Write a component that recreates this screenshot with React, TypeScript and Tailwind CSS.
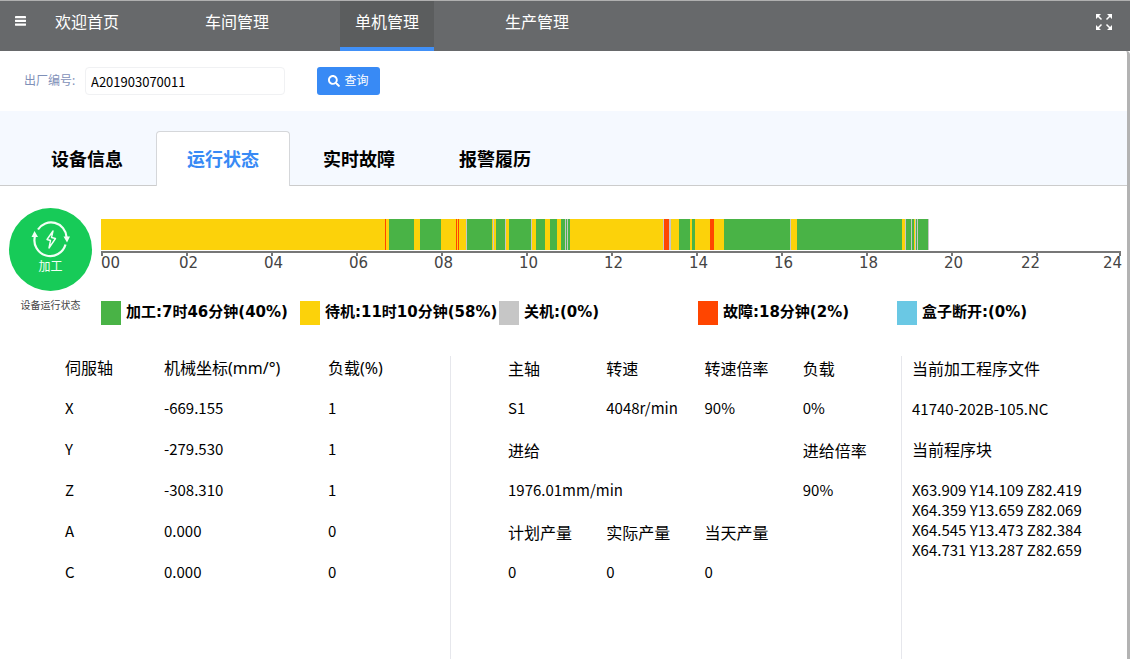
import React from "react";
import { FaSearch } from "react-icons/fa";

const navItems = ["欢迎首页", "车间管理", "单机管理", "生产管理"];
const tabs = ["设备信息", "运行状态", "实时故障", "报警履历"];

const GREEN = "#49b346";
const YELLOW = "#fcd20a";
const RED = "#ff4500";
const GRAY = "#c6c6c6";

/* Each run: [length, colour]; one unit is 1/1020 of the 24-hour axis. */
const runs: [number, string][] = [
  [284, YELLOW], [1, RED], [3, YELLOW], [25, GREEN], [6, YELLOW], [21, GREEN],
  [15, YELLOW], [1, RED], [1, YELLOW], [1, RED], [7, YELLOW], [1, GRAY],
  [25, GREEN], [1, YELLOW], [1, GRAY], [2, YELLOW], [9, GREEN], [1, GRAY], [3, YELLOW],
  [22, GREEN], [1, GRAY], [4, YELLOW], [9, GREEN], [5, YELLOW], [7, GREEN],
  [4, YELLOW], [4, GREEN], [1, GRAY], [1, GREEN], [1, GRAY], [2, GREEN],
  [93, YELLOW], [1, GRAY], [5, RED], [2, GRAY], [8, YELLOW], [11, GREEN],
  [2, YELLOW], [3, GREEN], [15, YELLOW], [4, RED], [10, YELLOW], [66, GREEN],
  [1, GRAY], [6, YELLOW], [105, GREEN], [3, YELLOW], [1, GRAY], [5, GREEN],
  [1, GRAY], [2, GREEN], [1, YELLOW], [1, GRAY], [1, GREEN], [1, GRAY], [10, GREEN], [1, GRAY],
];

const bars = runs.map(([length, color], i) => ({
  x: runs.slice(0, i).reduce((sum, [l]) => sum + l, 0),
  length,
  color,
}));

const hours = ["00", "02", "04", "06", "08", "10", "12", "14", "16", "18", "20", "22"];

const legend = [
  ["bg-[#49b346]", "加工:7时46分钟(40%)"],
  ["bg-[#fcd20a]", "待机:11时10分钟(58%)"],
  ["bg-[#c6c6c6]", "关机:(0%)"],
  ["bg-[#ff4500]", "故障:18分钟(2%)"],
  ["bg-[#6ac8e4]", "盒子断开:(0%)"],
];

const axes = [
  ["X", "-669.155", "1"],
  ["Y", "-279.530", "1"],
  ["Z", "-308.310", "1"],
  ["A", "0.000", "0"],
  ["C", "0.000", "0"],
];

const program = [
  "X63.909 Y14.109 Z82.419",
  "X64.359 Y13.659 Z82.069",
  "X64.545 Y13.473 Z82.384",
  "X64.731 Y13.287 Z82.659",
];

function MenuIcon() {
  return (
    <svg viewBox="0 0 11 10" className="h-2.5 w-[11px]" fill="currentColor">
      <rect y="0" width="11" height="2.300" rx=".4" />
      <rect y="3.700" width="11" height="2.300" rx=".4" />
      <rect y="7.400" width="11" height="2.300" rx=".4" />
    </svg>
  );
}

function ExpandIcon() {
  return (
    <svg viewBox="0 0 18 18" className="size-[18px]" fill="currentColor" stroke="currentColor">
      <path d="M2 2L6.500 6.500M16 2L11.500 6.500M2 16L6.500 11.500M16 16L11.500 11.500" strokeWidth="1.500" />
      <path d="M1 1H6L1 6ZM17 1H12L17 6ZM1 17H6L1 12ZM17 17H12L17 12Z" stroke="none" />
    </svg>
  );
}

function CycleIcon() {
  return (
    <svg viewBox="0 0 40 38" className="h-[38px] w-10" fill="none" stroke="#f2fff5">
      <path d="M7 9.500A15.500 15.500 0 0 1 35.500 17" strokeWidth="2.200" />
      <path d="M34.500 24.500A15.500 15.500 0 0 1 4 16" strokeWidth="2.200" />
      <path d="M32.500 16.500H39L36 22.500ZM.5 17H7L3.500 11Z" fill="#f2fff5" stroke="none" />
      <path d="M22 11L16 19.500L19.500 20.500L18 28L24.500 18.500L20.500 17.500Z" strokeWidth="1.400" strokeLinejoin="round" />
    </svg>
  );
}

function Header() {
  return (
    <header className="flex h-[51px] items-stretch border-t border-[#b0b0b0] bg-[#67696b] text-white">
      <button aria-label="菜单" className="flex w-10 items-start pt-[15px] pl-[15px]">
        <MenuIcon />
      </button>
      <nav className="flex gap-14">
        {navItems.map((name, i) => (
          <a
            key={name}
            href="#"
            className={
              i === 2
                ? "border-b-4 border-[#4190f7] bg-[#5b5d5e] px-[15px] pt-[9px] text-base/6"
                : "px-[15px] pt-[9px] text-base/6"
            }
          >
            {name}
          </a>
        ))}
      </nav>
      <button aria-label="全屏" className="ml-auto flex items-start pt-3 pr-[17px]">
        <ExpandIcon />
      </button>
    </header>
  );
}

function Search() {
  return (
    <form className="flex h-[60px] items-center pl-6" onSubmit={(e) => e.preventDefault()}>
      <label htmlFor="serial" className="w-[61px] text-xs text-[#7f90b8]">
        出厂编号:
      </label>
      <input
        id="serial"
        defaultValue="A201903070011"
        className="h-7 w-[200px] rounded border border-[#f0f1f3] px-[5px] font-['Noto_Sans_CJK_SC',sans-serif] text-[13px] text-black outline-none"
      />
      <button className="ml-8 flex h-7 w-[63px] items-center justify-center gap-1 rounded-[3px] bg-[#388af5] text-xs text-white">
        <FaSearch className="size-3" />
        查询
      </button>
    </form>
  );
}

function Tabs() {
  return (
    <div role="tablist" className="flex h-[75px] items-end gap-0.5 border-b border-[#cccccc] bg-[#f5f9ff] pl-5">
      {tabs.map((name, i) => (
        <button
          key={name}
          role="tab"
          aria-selected={i === 1}
          className={
            i === 1
              ? "-mb-px h-[55px] rounded-t border border-b-0 border-[#d5d7da] bg-white px-[30px] text-lg font-bold text-[#388af5]"
              : "-mb-px h-[55px] border border-b-0 border-transparent px-[30px] text-lg font-bold text-black"
          }
        >
          {name}
        </button>
      ))}
    </div>
  );
}

const hourLabel = "text-[15px]/[14px] text-[#444]";

function Timeline() {
  return (
    <section className="flex pt-[22px] pr-[6px] pl-[9px]">
      <div className="flex w-[92px] shrink-0 flex-col items-start">
        <div className="flex size-[83px] flex-col items-center rounded-full bg-[#17cb58] pt-3 text-[#f2fff5]">
          <CycleIcon />
          <span className="text-xs/[18px]">加工</span>
        </div>
        <span className="mt-2 w-[83px] text-center text-[10px]/3 text-[#444]">设备运行状态</span>
      </div>
      <div className="grow pt-[11px] font-['DejaVu_Sans','Noto_Sans_CJK_SC',sans-serif]">
        <svg viewBox="0 0 1020 31" preserveAspectRatio="none" shapeRendering="crispEdges" className="block h-[31px] w-full">
          {bars.map((b) => (
            <rect key={b.x} x={b.x} width={b.length} height="31" fill={b.color} />
          ))}
        </svg>
        <div className="mt-px flex border-t-2 border-[#777]">
          {hours.map((h, i) => (
            <div key={h} className="w-1/12">
              <div className="h-[3px] border-l-2 border-[#777]" />
              <div className={i === 0 ? hourLabel : i === 11 ? `-ml-[15px] ${hourLabel}` : `-ml-[7px] ${hourLabel}`}>
                {h}
              </div>
            </div>
          ))}
          <div className="w-0">
            <div className="-ml-0.5 h-[3px] w-0.5 bg-[#777]" />
            <div className={`-ml-[18px] ${hourLabel}`}>24</div>
          </div>
        </div>
        <div className="mt-[31px] mr-[25px] grid grid-cols-5 text-[15px]/[22px] font-bold text-black">
          {legend.map(([color, text]) => (
            <div key={text} className="flex gap-[5px] whitespace-nowrap">
              <span className={`h-6 w-5 shrink-0 ${color}`} />
              {text}
            </div>
          ))}
        </div>
      </div>
    </section>
  );
}

const head = "p-0 text-left align-middle text-base font-normal";
const topHead = "p-0 text-left align-top text-base/6 font-normal";

function Details() {
  return (
    <section className="mt-[31px] grid grow grid-cols-[451fr_451fr_225fr] font-['Noto_Sans_CJK_SC',sans-serif] text-[15px] text-black">
      <div className="border-r border-[#e6e7ec] pl-[65px]">
        <table className="w-full table-fixed border-collapse">
          <colgroup>
            <col className="w-[99px]" />
            <col className="w-[164px]" />
            <col />
          </colgroup>
          <thead className="font-['Noto_Sans','Noto_Sans_CJK_SC',sans-serif]">
            <tr className="h-8">
              <th className={topHead}>伺服轴</th>
              <th className={topHead}>机械坐标(mm/°)</th>
              <th className={topHead}>负载(%)</th>
            </tr>
          </thead>
          <tbody>
            {axes.map((row) => (
              <tr key={row[0]} className="h-[41px]">
                {row.map((v, i) => (
                  <td key={i}>{v}</td>
                ))}
              </tr>
            ))}
          </tbody>
        </table>
      </div>
      <div className="border-r border-[#e6e7ec] pl-[57px]">
        <table className="w-full table-fixed border-collapse">
          <tbody>
            <tr className="h-8">
              <th className={topHead}>主轴</th>
              <th className={topHead}>转速</th>
              <th className={topHead}>转速倍率</th>
              <th className={topHead}>负载</th>
            </tr>
            <tr className="h-[41px]">
              <td>S1</td>
              <td>4048r/min</td>
              <td>90%</td>
              <td>0%</td>
            </tr>
            <tr className="h-[41px]">
              <th className={head} colSpan={3}>进给</th>
              <th className={head}>进给倍率</th>
            </tr>
            <tr className="h-[41px]">
              <td colSpan={3}>1976.01mm/min</td>
              <td>90%</td>
            </tr>
            <tr className="h-[41px]">
              <th className={head}>计划产量</th>
              <th className={head}>实际产量</th>
              <th className={head} colSpan={2}>当天产量</th>
            </tr>
            <tr className="h-[41px]">
              <td>0</td>
              <td>0</td>
              <td colSpan={2}>0</td>
            </tr>
          </tbody>
        </table>
      </div>
      <div className="pl-2.5">
        <h2 className="h-8 text-base/6">当前加工程序文件</h2>
        <p className="leading-[41px]">41740-202B-105.NC</p>
        <h2 className="text-base/[41px]">当前程序块</h2>
        <div className="pt-2.5 leading-5">
          {program.map((line) => (
            <p key={line}>{line}</p>
          ))}
        </div>
      </div>
    </section>
  );
}

export default function App() {
  return (
    <div className="flex min-h-screen flex-col bg-white font-['Noto_Sans','Noto_Sans_CJK_SC',sans-serif]">
      <Header />
      <main className="flex grow flex-col rounded-tr border-r-[3px] border-[#b3b3b3]">
        <Search />
        <Tabs />
        <Timeline />
        <Details />
      </main>
    </div>
  );
}
